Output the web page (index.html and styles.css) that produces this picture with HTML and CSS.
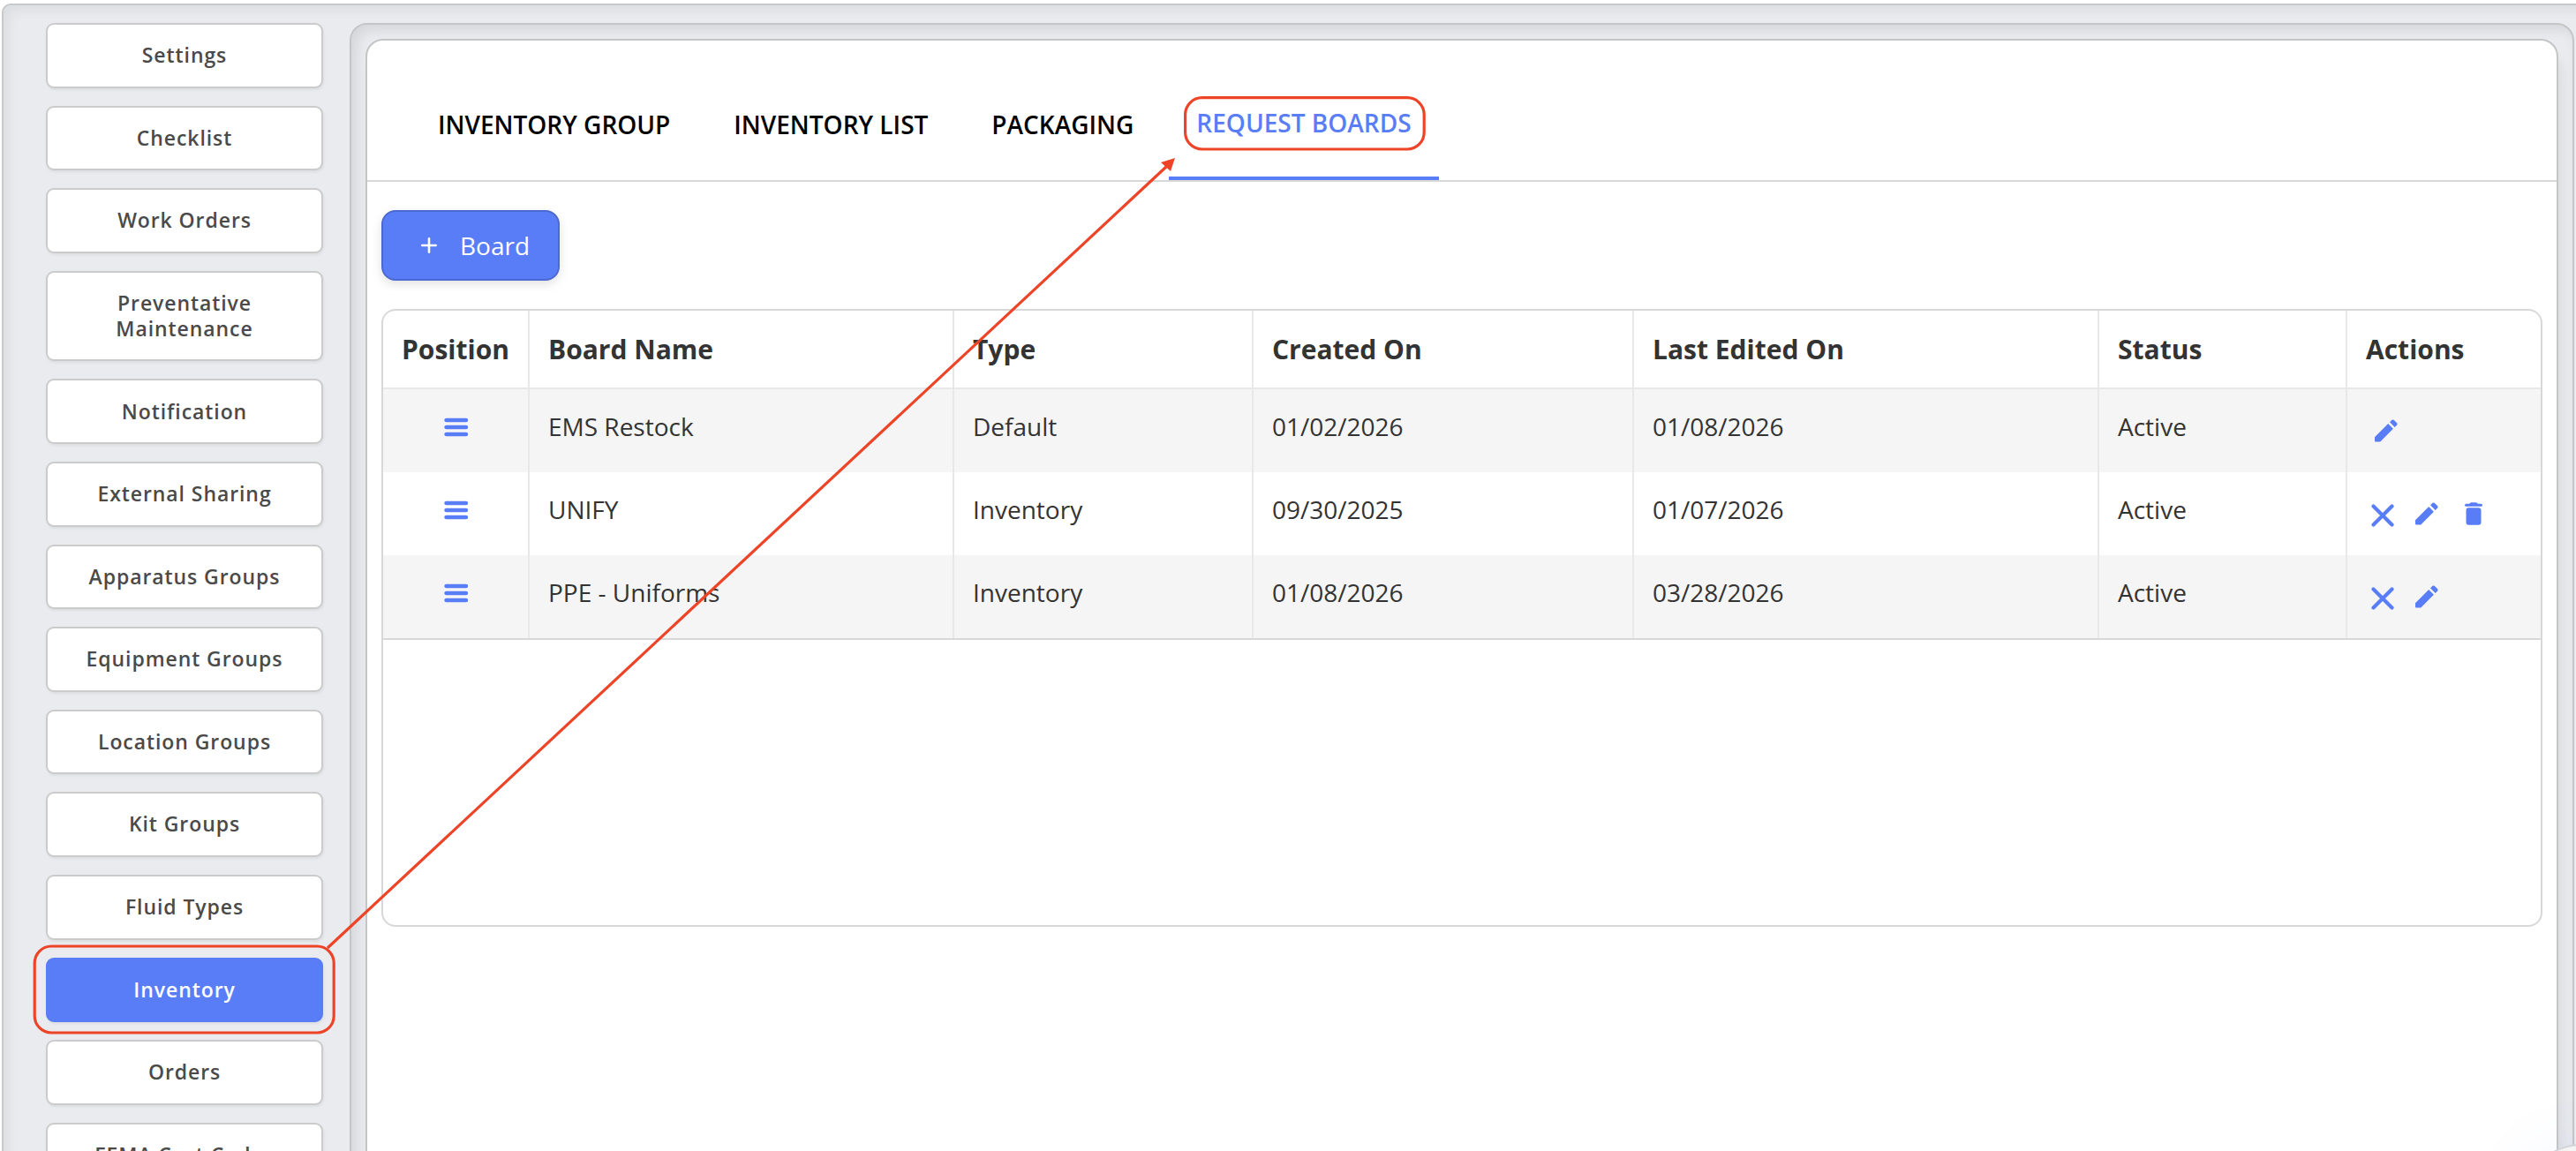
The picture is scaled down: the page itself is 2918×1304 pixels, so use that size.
FILE: index.html
```html
<!DOCTYPE html>
<html lang="en">
<head>
  <meta charset="utf-8">
  <title>Request Boards</title>
  <link rel="stylesheet" href="styles.css">
</head>
<body>
  <svg class="sprite">
    <symbol id="drag" viewBox="0 0 28 24">
      <path d="M2.500 4h22.500M2.500 12h22.500M2.500 20h22.500" stroke="currentColor" stroke-width="4.400" stroke-linecap="round"/>
    </symbol>
    <symbol id="close" viewBox="0 0 26 26">
      <path d="M2.500 2.500l21 21M23.500 2.500l-21 21" stroke="currentColor" stroke-width="4.200" stroke-linecap="round"/>
    </symbol>
    <symbol id="pencil" viewBox="0 0 26 26">
      <path d="M0 20.300L15.200 5.100L20.900 10.800L6.500 25.200Q6 25.600 5.300 25.600H1Q0 25.600 0 24.600z M17 3.300L19.500 .8Q20.600 0 21.700 .8L25.200 4.300Q26 5.300 25.200 6.400L22.700 9z" fill="currentColor"/>
    </symbol>
    <symbol id="trash" viewBox="0 0 20 26">
      <path d="M1.500 1.700H5Q6 .2 7.500 .2H12.500Q14 .2 15 1.700H18.500Q20 1.700 20 3.300Q20 4.800 18.500 4.800H1.500Q0 4.800 0 3.300Q0 1.700 1.500 1.700z M4.500 6.300H15.500Q18.500 6.300 18.500 9.300V22.700Q18.500 25.700 15.500 25.700H4.500Q1.500 25.700 1.500 22.700V9.300Q1.500 6.300 4.500 6.300z" fill="currentColor"/>
    </symbol>
  </svg>

  <div class="app">
    <nav class="sidebar">
      <button>Settings</button>
      <button>Checklist</button>
      <button>Work Orders</button>
      <button>Preventative<br>Maintenance</button>
      <button>Notification</button>
      <button>External Sharing</button>
      <button>Apparatus Groups</button>
      <button>Equipment Groups</button>
      <button>Location Groups</button>
      <button>Kit Groups</button>
      <button>Fluid Types</button>
      <button class="active">Inventory</button>
      <button>Orders</button>
      <button>FEMA Cost Codes</button>
    </nav>

    <div class="frame">
      <main class="panel">
        <div class="tabs">
          <a class="tab">INVENTORY GROUP</a>
          <a class="tab">INVENTORY LIST</a>
          <a class="tab">PACKAGING</a>
          <a class="tab active">REQUEST BOARDS</a>
        </div>

        <button class="add-board">
          <svg class="plus" viewBox="0 0 18 18"><path d="M9 1.300v15.400M1.300 9h15.400" stroke="#fff" stroke-width="2.600" stroke-linecap="round"/></svg>
          Board
        </button>

        <div class="table-box">
          <table>
            <colgroup>
              <col class="c-pos"><col class="c-name"><col class="c-type"><col class="c-created"><col class="c-edited"><col class="c-status"><col>
            </colgroup>
            <thead>
              <tr>
                <th>Position</th><th>Board Name</th><th>Type</th><th>Created On</th><th>Last Edited On</th><th>Status</th><th>Actions</th>
              </tr>
            </thead>
            <tbody>
              <tr>
                <td class="pos"><svg class="drag"><use href="#drag"/></svg></td>
                <td>EMS Restock</td><td>Default</td><td>01/02/2026</td><td>01/08/2026</td><td>Active</td>
                <td><div class="actions single"><svg class="pencil"><use href="#pencil"/></svg></div></td>
              </tr>
              <tr>
                <td class="pos"><svg class="drag"><use href="#drag"/></svg></td>
                <td>UNIFY</td><td>Inventory</td><td>09/30/2025</td><td>01/07/2026</td><td>Active</td>
                <td><div class="actions"><svg class="close"><use href="#close"/></svg><svg class="pencil"><use href="#pencil"/></svg><svg class="trash"><use href="#trash"/></svg></div></td>
              </tr>
              <tr>
                <td class="pos"><svg class="drag"><use href="#drag"/></svg></td>
                <td>PPE - Uniforms</td><td>Inventory</td><td>01/08/2026</td><td>03/28/2026</td><td>Active</td>
                <td><div class="actions"><svg class="close"><use href="#close"/></svg><svg class="pencil"><use href="#pencil"/></svg></div></td>
              </tr>
            </tbody>
          </table>
        </div>
      </main>
    </div>
  </div>

  <div class="fab"></div>

  <!-- walkthrough markup: sidebar item -> tab -->
  <svg class="callout" viewBox="0 0 2918 1304">
    <rect x="39.200" y="1072" width="339" height="98" rx="19"/>
    <rect x="1342.600" y="110.700" width="270.600" height="58.300" rx="19"/>
    <line x1="371" y1="1074" x2="1321" y2="189"/>
    <path class="head" d="M1331 179L1315 184L1326 194z"/>
  </svg>
</body>
</html>
```

FILE: styles.css
```css
* {
  box-sizing: border-box;
}

html {
  overflow: hidden;
}

body {
  margin: 0;
  height: 1304px;
  padding: 4px 0 0 2px;
  overflow: hidden;
  background: #fff;
  color: #333;
  font-family: "Open Sans", "Noto Sans", sans-serif;
  font-size: 28px;
}

button {
  font-family: inherit;
}

.sprite {
  display: none;
}

.app {
  display: flex;
  gap: 30px;
  width: 2930px;
  height: 1400px;
  padding: 20px 0 0 48px;
  background: #e9ebef;
  border: 2px solid #c8c9ca;
  border-radius: 10px;
  box-shadow: inset 6px 6px 14px rgba(0, 0, 0, 0.06);
}

/* sidebar */
.sidebar {
  display: flex;
  flex-direction: column;
  gap: 20px;
  width: 314px;
}

.sidebar button {
  flex: none;
  min-height: 73.6px;
  padding: 20px 10px;
  background: #fff;
  border: 2px solid #cbcbcb;
  border-radius: 9px;
  box-shadow: 1px 2px 3px rgba(0, 0, 0, 0.06);
  color: #4a4a4a;
  font-size: 23px;
  font-weight: 600;
  line-height: 29.3px;
  letter-spacing: 0.92px;
}

.sidebar button.active {
  background: #597df7;
  border-color: #597df7;
  color: #fff;
}

/* content */
.frame {
  width: 2520px;
  height: 1400px;
  padding: 16px;
  background: #e9ebef;
  border: 2px solid #c4c5c5;
  border-radius: 20px;
  box-shadow: inset 6px 6px 14px rgba(0, 0, 0, 0.09);
}

.panel {
  height: 1400px;
  background: #fff;
  border: 2px solid #c4c5c5;
  border-radius: 20px;
  box-shadow: 6px 20px 14px rgba(0, 0, 0, 0.06);
}

.tabs {
  display: flex;
  height: 160px;
  padding: 36px 0 0 44px;
  border-bottom: 2px solid #d8d8d8;
}

.tab {
  padding: 40px 36px 0;
  color: #000;
  font-weight: 600;
  line-height: 38px;
}

.tab.active {
  padding: 38px 31px 0;
  margin-left: 4px;
  border-bottom: 4px solid #597df7;
  color: #597df7;
}

.add-board {
  display: flex;
  align-items: center;
  gap: 26px;
  width: 202px;
  height: 80px;
  margin: 32px 0 32px 16px;
  padding: 0 0 0 43px;
  background: #597df7;
  border: 2px solid #4b69d0;
  border-radius: 16px;
  box-shadow: 0 4px 12px rgba(0, 0, 0, 0.12);
  color: #fff;
  font-size: 28px;
}

.plus {
  width: 18px;
  height: 18px;
}

.table-box {
  width: 2448px;
  height: 700px;
  margin-left: 16px;
  border: 2px solid #d8d8d8;
  border-radius: 16px;
  overflow: hidden;
}

table {
  width: 100%;
  border-spacing: 0;
  table-layout: fixed;
  border-bottom: 2px solid #d8d8d8;
}

.c-pos { width: 166px; }
.c-name { width: 481px; }
.c-type { width: 339px; }
.c-created { width: 431px; }
.c-edited { width: 527px; }
.c-status { width: 281px; }

th {
  height: 89px;
  padding: 0 20px 0 21px;
  border-right: 2px solid #e8e8e8;
  border-bottom: 2px solid #e8e8e8;
  font-size: 30px;
  font-weight: 700;
  text-align: left;
  white-space: nowrap;
}

td {
  height: 94px;
  padding: 0 20px 11px 21px;
  border-right: 2px solid #e8e8e8;
}

th:last-child,
td:last-child {
  border-right: 0;
}

tbody tr:nth-child(odd) {
  background: #f5f5f5;
}

td.pos {
  padding-bottom: 16px;
  text-align: center;
}

.drag,
.actions {
  color: #597df7;
}

.drag {
  width: 28px;
  height: 24px;
  vertical-align: middle;
}

.actions {
  display: flex;
  align-items: center;
  gap: 25px;
  padding: 11px 0 0 6px;
}

.actions.single {
  padding-left: 11px;
}

.close,
.pencil {
  width: 26px;
  height: 26px;
}

.close {
  margin-top: 4px;
}

.actions .pencil {
  margin-left: -1px;
}

.trash {
  width: 20px;
  height: 26px;
  margin-left: 5px;
}

/* floating button, mostly off screen */
.fab {
  position: fixed;
  left: 2857px;
  top: 1296px;
  width: 136px;
  height: 136px;
  background: #f4f4f4;
  border: 2px solid #d4d5d8;
  border-radius: 50%;
  box-shadow: 0 8px 80px rgba(89, 125, 247, 0.08);
}

.callout {
  position: absolute;
  left: 0;
  top: 0;
  width: 2918px;
  height: 1304px;
  fill: none;
  stroke: #ed4427;
  stroke-width: 3.2;
}

.callout .head {
  fill: #ed4427;
  stroke: none;
}
```
